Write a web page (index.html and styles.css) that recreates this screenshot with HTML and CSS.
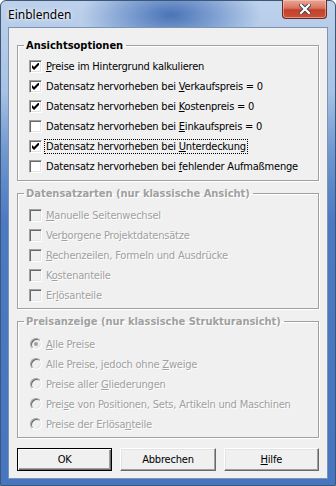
FILE: index.html
```
<!DOCTYPE html>
<html lang="de">
<head>
    <meta charset="UTF-8">
    <meta name="viewport" content="width=device-width, initial-scale=1.0">
    <title>Einblenden</title>
    <link rel="stylesheet" href="styles.css">
</head>
<body>
    <div class="window">
        <div class="titlebar">
            <span class="title">Einblenden</span>
            <div class="close-btn">
                <svg width="12" height="10" viewBox="0 0 12 10">
                    <path d="M2 1 L10 9 M10 1 L2 9" stroke="#3c3f4a" stroke-width="4" stroke-linecap="square"/>
                    <path d="M2 1 L10 9 M10 1 L2 9" stroke="#ffffff" stroke-width="2.2" stroke-linecap="square"/>
                </svg>
            </div>
        </div>
        <div class="client">
            <fieldset class="group group-first">
                <legend>Ansichtsoptionen</legend>
                <div class="rows">
                    <div class="row"><span class="cb checked"></span><span class="label"><u>P</u>reise im Hintergrund kalkulieren</span></div>
                    <div class="row"><span class="cb checked"></span><span class="label">Datensatz hervorheben bei <u>V</u>erkaufspreis = 0</span></div>
                    <div class="row"><span class="cb checked"></span><span class="label">Datensatz hervorheben bei <u>K</u>ostenpreis = 0</span></div>
                    <div class="row"><span class="cb"></span><span class="label">Datensatz hervorheben bei <u>E</u>inkaufspreis = 0</span></div>
                    <div class="row"><span class="cb checked"></span><span class="label focus">Datensatz hervorheben bei <u>U</u>nterdeckung</span></div>
                    <div class="row"><span class="cb"></span><span class="label">Datensatz hervorheben bei <u>f</u>ehlender Aufmaßmenge</span></div>
                </div>
            </fieldset>

            <fieldset class="group disabled group-second">
                <legend>Datensatzarten (nur klassische Ansicht)</legend>
                <div class="rows">
                    <div class="row"><span class="cb"></span><span class="label"><u>M</u>anuelle Seitenwechsel</span></div>
                    <div class="row"><span class="cb"></span><span class="label">Ver<u>b</u>orgene Projektdatensätze</span></div>
                    <div class="row"><span class="cb"></span><span class="label"><u>R</u>echenzeilen, Formeln und Ausdrücke</span></div>
                    <div class="row"><span class="cb"></span><span class="label">K<u>o</u>stenanteile</span></div>
                    <div class="row"><span class="cb"></span><span class="label">Er<u>l</u>ösanteile</span></div>
                </div>
            </fieldset>

            <fieldset class="group disabled group-third">
                <legend>Preisanzeige (nur klassische Strukturansicht)</legend>
                <div class="rows">
                    <div class="row"><span class="radio selected"></span><span class="label"><u>A</u>lle Preise</span></div>
                    <div class="row"><span class="radio"></span><span class="label">Alle Preise, jedoch ohne <u>Z</u>weige</span></div>
                    <div class="row"><span class="radio"></span><span class="label">Preise aller <u>G</u>liederungen</span></div>
                    <div class="row"><span class="radio"></span><span class="label">Prei<u>s</u>e von Positionen, Sets, Artikeln und Maschinen</span></div>
                    <div class="row"><span class="radio"></span><span class="label">Preise der Erlösa<u>n</u>teile</span></div>
                </div>
            </fieldset>

            <div class="buttons">
                <button class="btn default">OK</button>
                <button class="btn">Abbrechen</button>
                <button class="btn"><u>H</u>ilfe</button>
            </div>
        </div>
    </div>
</body>
</html>
```

FILE: styles.css
```
body {
    margin: 0;
    padding: 0;
    background: #ffffff;
}
.window {
    width: 336px;
    height: 486px;
    box-sizing: border-box;
    padding: 0 8px 7px 8px;
    border: 1px solid #3d5778;
    border-radius: 6px 6px 0 0;
    background:
        radial-gradient(ellipse 90px 40px at 170px 14px, #4a74b6 0%, rgba(90, 130, 195, 0.6) 50%, rgba(170, 196, 230, 0) 100%),
        linear-gradient(to bottom, #bdd1eb 0px, #a8c2e4 90px, #6f97d0 150px, #4b79c2 220px, #4676c0 100%);
    display: flex;
    flex-direction: column;
}
.titlebar {
    height: 27px;
    display: flex;
    align-items: flex-start;
    justify-content: space-between;
}
.title {
    font-family: "Noto Sans", "Open Sans", sans-serif;
    font-size: 12px;
    color: #000;
    margin-top: 5px;
    margin-left: -1px;
    text-shadow: 0 0 6px rgba(255, 255, 255, 0.9), 0 0 3px rgba(255, 255, 255, 0.9);
}
.close-btn {
    width: 45px;
    height: 19px;
    box-sizing: border-box;
    margin-top: -1px;
    border: 1px solid #6a2a22;
    border-top: none;
    border-radius: 0 0 4px 4px;
    background: linear-gradient(to bottom, #e9a897 0%, #d9735e 45%, #c5402a 55%, #c8523a 100%);
    box-shadow: inset 0 0 0 1px rgba(255, 210, 200, 0.5);
    display: flex;
    align-items: center;
    justify-content: center;
}
.client {
    flex: 1;
    background: #f0f0f0;
    box-shadow: 0 0 0 1px #7d93b3;
    padding: 11px 8px 0 8px;
    font-family: "DejaVu Sans Condensed", "DejaVu Sans", sans-serif;
    font-stretch: condensed;
    font-size: 11px;
    color: #000;
}
.group {
    margin: 0;
    padding: 0 0 4px 0;
    border: 1px solid #a0a0a0;
    box-shadow: inset 1px 1px 0 #ffffff, 1px 1px 0 #ffffff;
}
.group legend {
    margin-left: 6px;
    padding: 0 3px 0 2px;
    font-weight: bold;
    line-height: 13px;
}
.group-second, .group-third {
    margin-top: 6px;
    padding-bottom: 3px;
}
.rows {
    padding-left: 11px;
    margin-top: 4px;
}
.group-second .rows {
    margin-top: 5px;
}
.group-third .rows {
    margin-top: 6px;
}
.row {
    height: 20px;
    display: flex;
    align-items: center;
}
.label {
    margin-left: 4px;
    line-height: 13px;
    letter-spacing: -0.2px;
    white-space: nowrap;
}
.focus {
    outline: 1px dotted #000;
    outline-offset: 0;
    margin-left: 3px;
    padding: 0 1px;
}
.cb {
    width: 13px;
    height: 13px;
    box-sizing: border-box;
    border: 1px solid;
    border-color: #a0a0a0 #ffffff #ffffff #a0a0a0;
    box-shadow: inset 1px 1px 0 #696969, inset -1px -1px 0 #e3e3e3;
    background: #ffffff;
    flex-shrink: 0;
}
.cb.checked {
    background: #ffffff url("data:image/svg+xml;utf8,<svg xmlns='http://www.w3.org/2000/svg' width='7' height='7'><polygon points='0,2 2,4 7,-1 7,2 2,7 0,5' fill='black'/></svg>") no-repeat 2px 2px;
}
.radio {
    width: 12px;
    height: 12px;
    box-sizing: border-box;
    margin-left: 1px;
    border-radius: 50%;
    border: 1px solid;
    border-color: #a0a0a0 #ffffff #ffffff #a0a0a0;
    box-shadow: inset 1px 1px 0 #696969, inset -1px -1px 0 #e3e3e3;
    background: #f0f0f0;
    flex-shrink: 0;
    display: flex;
    align-items: center;
    justify-content: center;
}
.radio.selected::after {
    content: "";
    width: 4px;
    height: 4px;
    border-radius: 50%;
    background: #a0a0a0;
}
.disabled legend,
.disabled .label {
    color: #a0a0a0;
    text-shadow: 1px 1px 0 #ffffff;
}
.disabled .cb {
    background: #f0f0f0;
}
.buttons {
    display: flex;
    gap: 8px;
    margin-top: 10px;
}
.btn {
    width: 96px;
    height: 23px;
    box-sizing: border-box;
    padding: 0;
    font-family: inherit;
    font-stretch: inherit;
    font-size: 11px;
    letter-spacing: -0.2px;
    color: #000;
    background: #f0f0f0;
    border: 1px solid;
    border-color: #ffffff #696969 #696969 #ffffff;
    box-shadow: inset -1px -1px 0 #a0a0a0, inset 1px 1px 0 #e3e3e3;
}
.btn.default {
    border: 1px solid #000;
    box-shadow: inset 1px 1px 0 #ffffff, inset -1px -1px 0 #696969, inset -2px -2px 0 #a0a0a0;
}
```
